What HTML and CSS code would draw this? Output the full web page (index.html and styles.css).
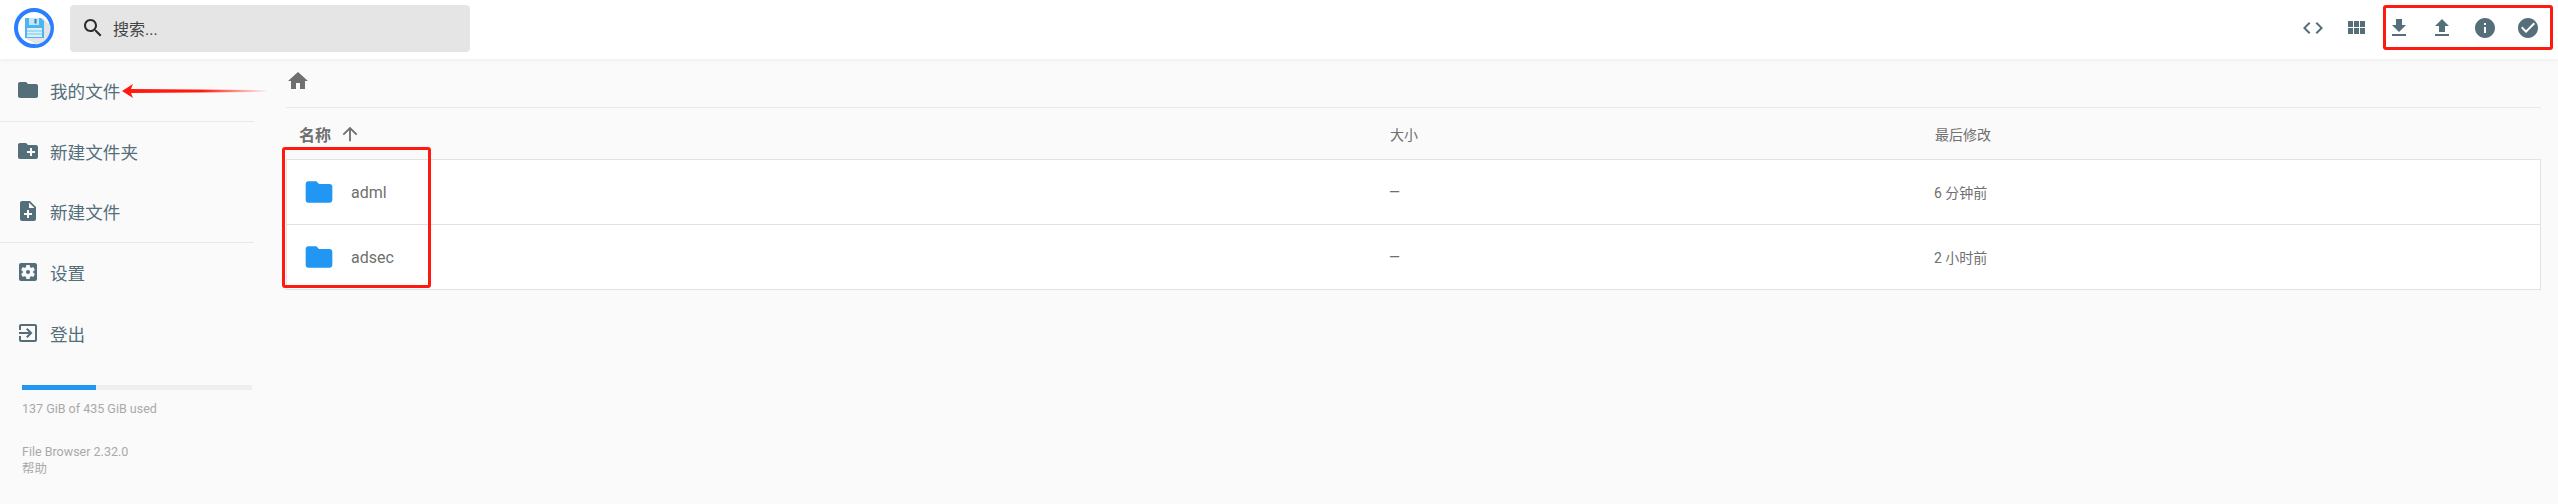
FILE: index.html
```html
<!DOCTYPE html>
<html lang="zh-CN">
<head>
  <meta charset="UTF-8" />
  <title>File Browser</title>
  <link rel="stylesheet" href="styles.css">
</head>
<body>

  <!-- Header -->
  <header class="top-bar">
    <svg class="logo" viewBox="0 0 44 44" aria-hidden="true">
      <circle cx="22" cy="22" r="18" fill="#fff" stroke="#2b7fff" stroke-width="4"/>
      <path d="M31 12 L38.5 20 A17 17 0 0 1 24 38.5 L13 32 Z" fill="#e4e4e4"/>
      <path d="M13 12 H29 L32 15 V32 H13 Z" fill="#4db4f0"/>
      <rect x="17" y="12" width="10" height="7" fill="#bfe6fa"/>
      <rect x="22.5" y="13" width="2" height="4.5" fill="#2a7fc0"/>
      <rect x="15" y="22" width="15" height="9" fill="#d9f0fb"/>
      <rect x="15" y="24.5" width="15" height="1" fill="#7cc3ea"/>
      <rect x="15" y="27.5" width="15" height="1" fill="#7cc3ea"/>
    </svg>

    <div class="search-box">
      <svg class="icon search-icon" viewBox="0 0 24 24"><path d="M15.5 14h-.79l-.28-.27C15.41 12.59 16 11.11 16 9.5 16 5.91 13.09 3 9.5 3S3 5.91 3 9.5 5.91 16 9.5 16c1.61 0 3.09-.59 4.23-1.57l.27.28v.79l5 4.99L20.49 19l-4.99-5zm-6 0C7.01 14 5 11.99 5 9.5S7.01 5 9.5 5 14 7.01 14 9.5 11.99 14 9.5 14z"/></svg>
      <span class="search-text">搜索...</span>
    </div>

    <div class="top-actions">
      <button class="action-btn"><svg class="icon" viewBox="0 0 24 24"><path d="M9.4 16.6L4.8 12l4.6-4.6L8 6l-6 6 6 6 1.4-1.4zm5.2 0l4.6-4.6-4.6-4.6L16 6l6 6-6 6-1.4-1.4z"/></svg></button>
      <button class="action-btn"><svg class="icon" viewBox="0 0 24 24"><path d="M4 11h5V5H4v6zm0 7h5v-6H4v6zm6 0h5v-6h-5v6zm6 0h5v-6h-5v6zm-6-7h5V5h-5v6zm6-6v6h5V5h-5z"/></svg></button>
      <button class="action-btn"><svg class="icon" viewBox="0 0 24 24"><path d="M19 9h-4V3H9v6H5l7 7 7-7zM5 18v2h14v-2H5z"/></svg></button>
      <button class="action-btn"><svg class="icon" viewBox="0 0 24 24"><path d="M9 16h6v-6h4l-7-7-7 7h4v6zm-4 2h14v2H5z"/></svg></button>
      <button class="action-btn"><svg class="icon" viewBox="0 0 24 24"><path d="M12 2C6.48 2 2 6.48 2 12s4.48 10 10 10 10-4.48 10-10S17.52 2 12 2zm1 15h-2v-6h2v6zm0-8h-2V7h2v2z"/></svg></button>
      <button class="action-btn"><svg class="icon" viewBox="0 0 24 24"><path d="M12 2C6.48 2 2 6.48 2 12s4.48 10 10 10 10-4.48 10-10S17.52 2 12 2zm-2 15l-5-5 1.41-1.41L10 14.17l7.59-7.59L19 8l-9 9z"/></svg></button>
    </div>
  </header>

  <div class="page">
    <!-- Sidebar -->
    <nav class="sidebar">
      <div class="nav-group">
        <a class="nav-item"><svg class="icon" viewBox="0 0 24 24"><path d="M10 4H4c-1.1 0-1.99.9-1.99 2L2 18c0 1.1.9 2 2 2h16c1.1 0 2-.9 2-2V8c0-1.1-.9-2-2-2h-8l-2-2z"/></svg><span>我的文件</span></a>
      </div>
      <div class="nav-group">
        <a class="nav-item"><svg class="icon" viewBox="0 0 24 24"><path d="M20 6h-8l-2-2H4c-1.11 0-1.99.89-1.99 2L2 18c0 1.11.89 2 2 2h16c1.11 0 2-.89 2-2V8c0-1.11-.89-2-2-2zm-1 8h-3v3h-2v-3h-3v-2h3V9h2v3h3v2z"/></svg><span>新建文件夹</span></a>
        <a class="nav-item"><svg class="icon" viewBox="0 0 24 24"><path d="M14 2H6c-1.1 0-1.99.9-1.99 2L4 20c0 1.1.89 2 1.99 2H18c1.1 0 2-.9 2-2V8l-6-6zm2 14h-3v3h-2v-3H8v-2h3v-3h2v3h3v2zm-3-7V3.5L18.5 9H13z"/></svg><span>新建文件</span></a>
      </div>
      <div class="nav-group">
        <a class="nav-item"><svg class="icon" viewBox="0 0 24 24"><path d="M12 10c-1.1 0-2 .9-2 2s.9 2 2 2 2-.9 2-2-.9-2-2-2zm7-7H5c-1.11 0-2 .9-2 2v14c0 1.1.89 2 2 2h14c1.11 0 2-.9 2-2V5c0-1.1-.89-2-2-2zm-1.75 9c0 .23-.02.46-.05.68l1.48 1.16c.13.11.17.3.08.45l-1.4 2.42c-.09.15-.27.21-.43.15l-1.74-.7c-.36.28-.76.51-1.18.69l-.26 1.85c-.03.17-.18.3-.35.3h-2.8c-.17 0-.32-.13-.35-.29l-.26-1.85c-.43-.18-.82-.41-1.18-.69l-1.74.7c-.16.06-.34 0-.43-.15l-1.4-2.42c-.09-.15-.05-.34.08-.45l1.48-1.16c-.03-.23-.05-.46-.05-.69 0-.23.02-.46.05-.68l-1.48-1.16c-.13-.11-.17-.3-.08-.45l1.4-2.42c.09-.15.27-.21.43-.15l1.74.7c.36-.28.76-.51 1.18-.69l.26-1.85c.03-.17.18-.3.35-.3h2.8c.17 0 .32.13.35.29l.26 1.85c.43.18.82.41 1.18.69l1.74-.7c.16-.06.34 0 .43.15l1.4 2.42c.09.15.05.34-.08.45l-1.48 1.16c.03.23.05.46.05.69z"/></svg><span>设置</span></a>
        <a class="nav-item"><svg class="icon" viewBox="0 0 24 24"><path d="M10.09 15.59L11.5 17l5-5-5-5-1.41 1.41L12.67 11H3v2h9.67l-2.58 2.59zM19 3H5c-1.11 0-2 .9-2 2v4h2V5h14v14H5v-4H3v4c0 1.1.89 2 2 2h14c1.1 0 2-.9 2-2V5c0-1.1-.9-2-2-2z"/></svg><span>登出</span></a>
      </div>

      <div class="usage">
        <div class="usage-track"><div class="usage-fill" style="width: 32%"></div></div>
        <p class="usage-text">137 GiB of 435 GiB used</p>
      </div>

      <div class="credits">
        <p>File Browser 2.32.0</p>
        <p>帮助</p>
      </div>
    </nav>

    <!-- File listing -->
    <main class="content">
      <div class="breadcrumbs">
        <svg class="icon home-icon" viewBox="0 0 24 24"><path d="M10 20v-6h4v6h5v-8h3L12 3 2 12h3v8z"/></svg>
      </div>

      <div class="list-head">
        <div class="head-name">名称 <svg class="icon sort-icon" viewBox="0 0 24 24"><path d="M4 12l1.41 1.41L11 7.83V20h2V7.83l5.58 5.59L20 12l-8-8-8 8z"/></svg></div>
        <div>大小</div>
        <div>最后修改</div>
      </div>

      <div class="list-body">
        <div class="file-row">
          <div class="file-name"><svg class="icon folder-icon" viewBox="0 0 24 24"><path d="M10 4H4c-1.1 0-1.99.9-1.99 2L2 18c0 1.1.9 2 2 2h16c1.1 0 2-.9 2-2V8c0-1.1-.9-2-2-2h-8l-2-2z"/></svg><span>adml</span></div>
          <div>—</div>
          <div>6 分钟前</div>
        </div>
        <div class="file-row">
          <div class="file-name"><svg class="icon folder-icon" viewBox="0 0 24 24"><path d="M10 4H4c-1.1 0-1.99.9-1.99 2L2 18c0 1.1.9 2 2 2h16c1.1 0 2-.9 2-2V8c0-1.1-.9-2-2-2h-8l-2-2z"/></svg><span>adsec</span></div>
          <div>—</div>
          <div>2 小时前</div>
        </div>
      </div>
    </main>
  </div>

  <!-- Red annotations drawn on top of the screenshot -->
  <div class="mark mark-actions"></div>
  <div class="mark mark-rows"></div>
  <svg class="mark-arrow" viewBox="0 0 146 16" aria-hidden="true">
    <defs>
      <linearGradient id="arrowFade" x1="0" x2="1" y1="0" y2="0">
        <stop offset="0" stop-color="#ff1a0f"/>
        <stop offset="0.55" stop-color="#ff1a0f"/>
        <stop offset="1" stop-color="#ff1a0f" stop-opacity="0"/>
      </linearGradient>
    </defs>
    <path d="M0 8 L11 1 L9 6 L146 7 V9 L9 10 L11 15 Z" fill="url(#arrowFade)"/>
  </svg>

</body>
</html>
```

FILE: styles.css
```css
/* Base */
* {
  box-sizing: border-box;
}

html,
body {
  height: 100%;
}

body {
  margin: 0;
  position: relative;
  overflow: hidden;
  display: flex;
  flex-direction: column;
  background: #fafafa;
  color: #6f6f6f;
  font-family: 'Roboto', 'Noto Sans CJK SC', sans-serif;
  font-size: 14px;
}

p {
  margin: 0;
}

.icon {
  display: block;
  width: 24px;
  height: 24px;
  flex: none;
  fill: #546e7a;
}

/* Header */
.top-bar {
  height: 59px;
  flex: none;
  display: flex;
  align-items: center;
  padding: 0 9px 3px 12px;
  background: #fff;
  box-shadow: 0 0 6px rgba(0, 0, 0, 0.08);
}

.logo {
  width: 44px;
  height: 44px;
  flex: none;
}

.search-box {
  width: 400px;
  height: 47px;
  margin-left: 14px;
  display: flex;
  align-items: center;
  padding-left: 11px;
  background: #e5e5e5;
  border-radius: 4px;
}

.search-icon {
  fill: #2b2b2b;
}

.search-text {
  margin-left: 8px;
  font-size: 16px;
  color: #444;
}

.top-actions {
  margin-left: auto;
  display: flex;
}

.action-btn {
  width: 43px;
  height: 44px;
  padding: 0;
  display: flex;
  align-items: center;
  justify-content: center;
  border: none;
  background: none;
}

/* Sidebar */
.page {
  flex: 1;
  display: flex;
  min-height: 0;
}

.sidebar {
  width: 254px;
  flex: none;
  margin-right: 32px;
  padding-top: 2px;
}

.nav-group {
  border-bottom: 1px solid #e9e9e9;
}

.nav-group:nth-child(3) {
  border-bottom: none;
}

.nav-item {
  height: 60px;
  display: flex;
  align-items: center;
  gap: 10px;
  padding: 0 0 2px 16px;
  color: #546e7a;
  font-size: 17.6px;
}

.nav-group:nth-child(3) .nav-item:last-child {
  padding-bottom: 0;
}

.usage {
  margin: 22px 0 0 22px;
  width: 230px;
}

.usage-track {
  height: 5px;
  background: #eee;
}

.usage-fill {
  height: 100%;
  background: #2196f3;
}

.usage-text {
  margin-top: 11px;
  font-size: 12.5px;
  line-height: 16px;
  color: #a9a9a9;
  white-space: nowrap;
}

.credits {
  margin: 26px 0 0 22px;
  font-size: 12.5px;
  line-height: 17px;
  color: #a9a9a9;
}

/* File listing */
.content {
  flex: 1;
  min-width: 0;
  padding-right: 17px;
}

.breadcrumbs {
  height: 49px;
  display: flex;
  align-items: center;
  border-bottom: 1px solid #e9e9e9;
  padding-bottom: 4px;
}

.home-icon {
  fill: #6f6f6f;
}

.list-head,
.file-row {
  display: grid;
  align-items: center;
}

.list-head {
  height: 51px;
  grid-template-columns: 1104px 545px 1fr;
}

.head-name {
  display: flex;
  align-items: center;
  gap: 8px;
  padding-left: 13px;
  font-size: 16px;
  font-weight: 700;
}

.sort-icon {
  width: 22px;
  height: 22px;
  fill: #6f6f6f;
}

.list-body {
  border: 1px solid #e2e2e2;
  border-bottom: none;
  background: #fff;
}

.file-row {
  height: 65px;
  grid-template-columns: 1102px 545px 1fr;
  border-bottom: 1px solid #e2e2e2;
}

.file-name {
  display: flex;
  align-items: center;
  gap: 16px;
  padding-left: 16px;
  font-size: 16px;
}

.folder-icon {
  width: 32px;
  height: 32px;
  fill: #2196f3;
}

/* Annotations */
.mark {
  position: absolute;
  border: 3px solid #ff1a0f;
  border-radius: 3px;
}

.mark-actions {
  left: 2383px;
  top: 5px;
  width: 170px;
  height: 45px;
}

.mark-rows {
  left: 282px;
  top: 147px;
  width: 149px;
  height: 141px;
}

.mark-arrow {
  position: absolute;
  left: 122px;
  top: 83px;
  width: 146px;
  height: 16px;
}
```
